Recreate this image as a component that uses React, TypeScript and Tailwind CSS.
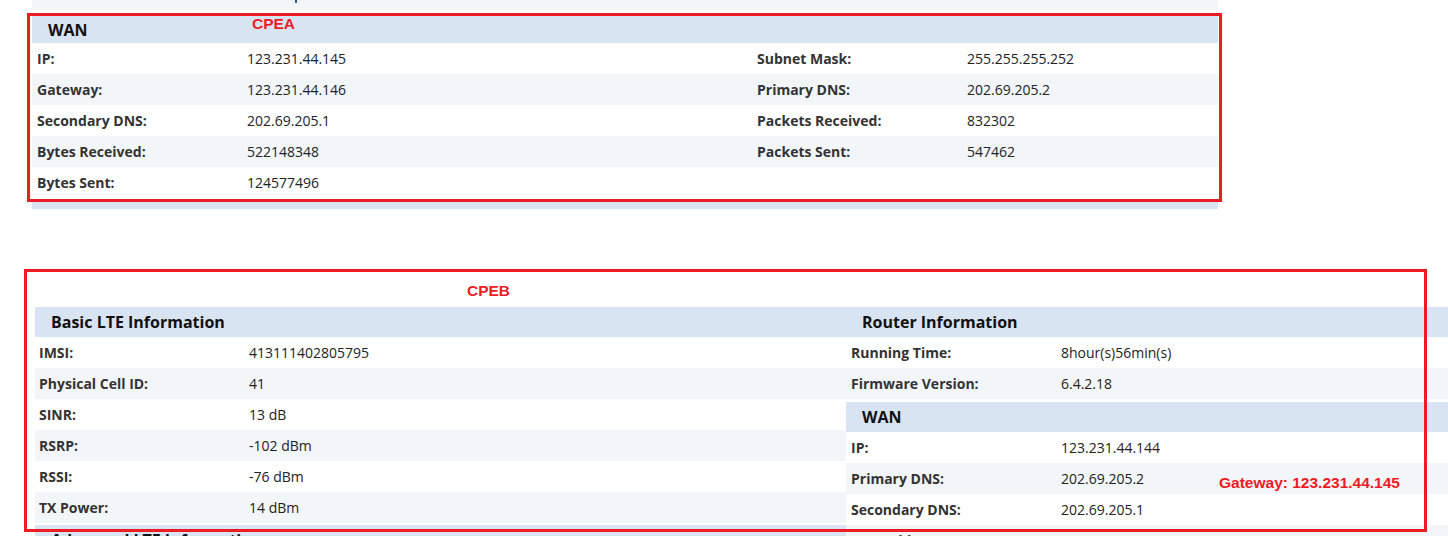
import React from "react";

type Pair = [string, string];

const cpeaRows: [string, string, string, string][] = [
  ["IP:", "123.231.44.145", "Subnet Mask:", "255.255.255.252"],
  ["Gateway:", "123.231.44.146", "Primary DNS:", "202.69.205.2"],
  ["Secondary DNS:", "202.69.205.1", "Packets Received:", "832302"],
  ["Bytes Received:", "522148348", "Packets Sent:", "547462"],
  ["Bytes Sent:", "124577496", "", ""],
];

const lteRows: Pair[] = [
  ["IMSI:", "413111402805795"],
  ["Physical Cell ID:", "41"],
  ["SINR:", "13 dB"],
  ["RSRP:", "-102 dBm"],
  ["RSSI:", "-76 dBm"],
  ["TX Power:", "14 dBm"],
];

const routerRows: Pair[] = [
  ["Running Time:", "8hour(s)56min(s)"],
  ["Firmware Version:", "6.4.2.18"],
];

const wanRows: Pair[] = [
  ["IP:", "123.231.44.144"],
  ["Primary DNS:", "202.69.205.2"],
  ["Secondary DNS:", "202.69.205.1"],
];

const SectionHead = ({ title, className = "" }: { title: string; className?: string }) => (
  <div
    className={`flex items-center bg-[#d9e4f3] px-4 text-[16px] font-bold text-[#111] ${className}`}
  >
    {title}
  </div>
);

const InfoRow = ({ row, striped, pad }: { row: Pair; striped: boolean; pad: string }) => (
  <div className={`flex h-[31px] items-center ${striped ? "bg-[#f3f6f9]" : "bg-white"}`}>
    <div className={`w-[210px] shrink-0 font-bold text-[#333] ${pad}`}>{row[0]}</div>
    <div className={`text-[#222] ${pad}`}>{row[1]}</div>
  </div>
);

export default function App() {
  return (
    <div className="relative h-[536px] w-full overflow-hidden bg-white font-['Open_Sans',sans-serif] text-[14px]">
      {/* CPEA screenshot */}
      <div className="ml-[32px] w-[1186px]">
        <div className="h-[10px] bg-[#f3f6f9] pl-[263px]">
          <div className="h-[3px] w-[2px] bg-[#35598f]" />
        </div>
        <SectionHead title="WAN" className="mt-[6px] h-[27px]" />
        {cpeaRows.map((r, i) => (
          <div
            key={r[0]}
            className={`flex h-[31px] items-center ${i % 2 === 1 ? "bg-[#f3f6f9]" : "bg-white"}`}
          >
            <div className="w-[210px] shrink-0 pl-[5px] font-bold text-[#333]">{r[0]}</div>
            <div className="w-[510px] shrink-0 pl-[5px] text-[#222]">{r[1]}</div>
            <div className="w-[210px] shrink-0 pl-[5px] font-bold text-[#333]">{r[2]}</div>
            <div className="pl-[5px] text-[#222]">{r[3]}</div>
          </div>
        ))}
        <div className="mt-[3px] h-[8px] bg-[#d9e4f3]" />
      </div>

      {/* CPEB screenshot */}
      <div className="ml-[35px] mt-[98px] flex">
        <div className="w-[811px] shrink-0">
          <SectionHead title="Basic LTE Information" className="h-[30px]" />
          {lteRows.map((r, i) => (
            <InfoRow key={r[0]} row={r} striped={i % 2 === 1} pad="pl-[4px]" />
          ))}
          <SectionHead title="Advanced LTE Information" className="mt-[2px] h-[30px]" />
        </div>
        <div className="flex-1">
          <SectionHead title="Router Information" className="h-[30px]" />
          {routerRows.map((r, i) => (
            <InfoRow key={r[0]} row={r} striped={i % 2 === 1} pad="pl-[5px]" />
          ))}
          <div className="mt-[3px]">
            <SectionHead title="WAN" className="h-[30px]" />
            {wanRows.map((r, i) => (
              <InfoRow key={r[0]} row={r} striped={i % 2 === 1} pad="pl-[5px]" />
            ))}
            <InfoRow row={["IPv6 Address:", ""]} striped pad="pl-[5px]" />
          </div>
        </div>
      </div>

      {/* annotations drawn over the screenshots */}
      <div className="pointer-events-none absolute left-[27px] top-[13px] h-[189px] w-[1195px] border-[3px] border-[#ed1c24]" />
      <div className="absolute left-[252px] top-[16px] font-['Liberation_Sans',Arial,sans-serif] text-[15.5px] font-bold leading-none text-[#ed1c24]">
        CPEA
      </div>
      <div className="pointer-events-none absolute left-[24px] top-[269px] h-[263px] w-[1403px] border-[3px] border-[#ed1c24]" />
      <div className="absolute left-[467px] top-[283px] font-['Liberation_Sans',Arial,sans-serif] text-[15.5px] font-bold leading-none text-[#ed1c24]">
        CPEB
      </div>
      <div className="absolute left-[1219px] top-[475px] font-['Liberation_Sans',Arial,sans-serif] text-[15.5px] font-bold leading-none text-[#ed1c24]">
        Gateway: 123.231.44.145
      </div>
    </div>
  );
}
